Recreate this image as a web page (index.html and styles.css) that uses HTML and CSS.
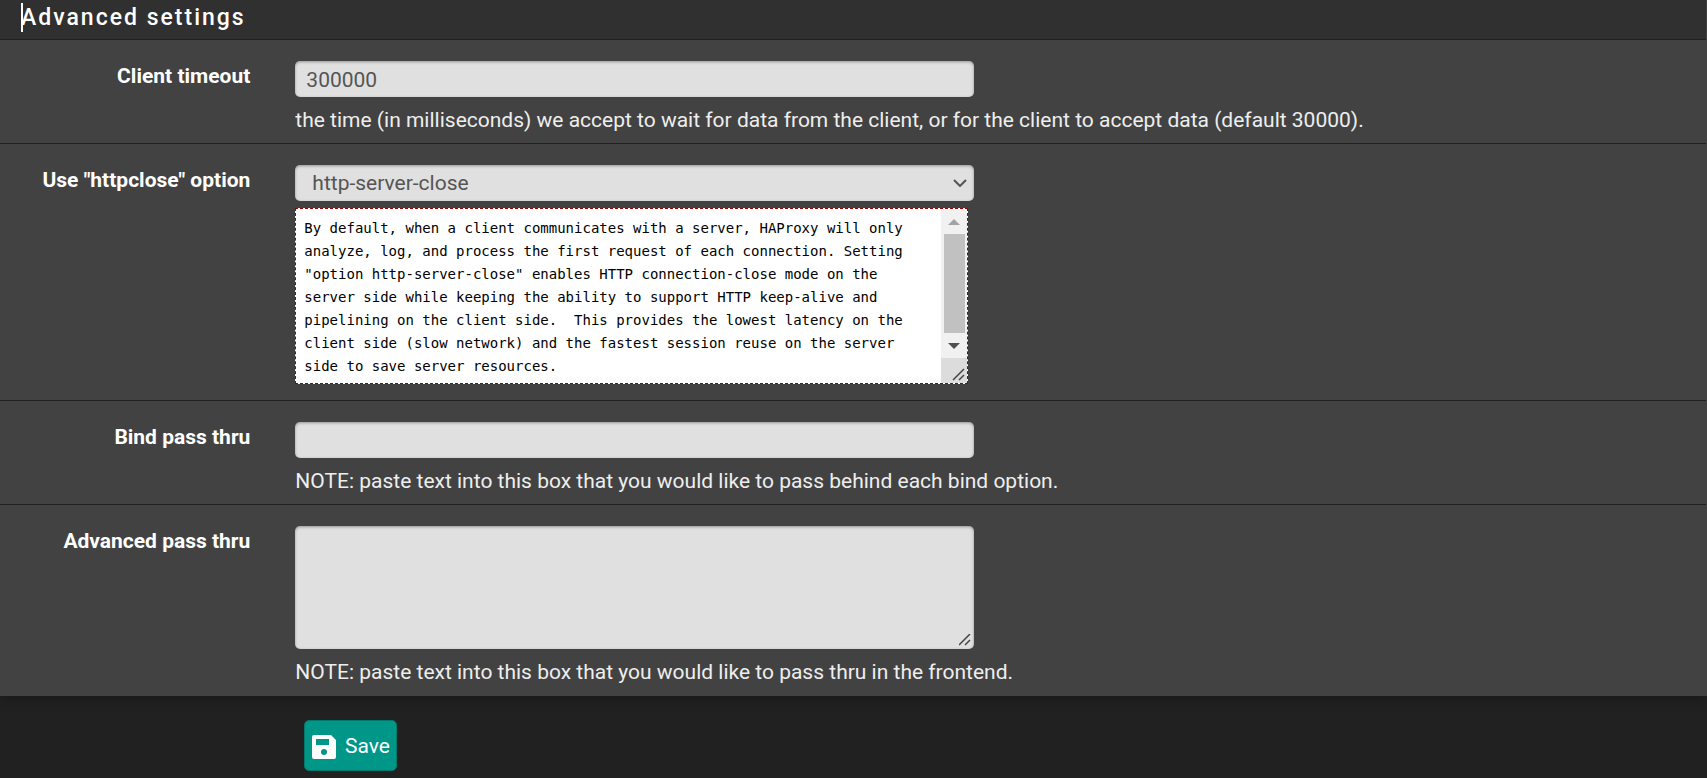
FILE: index.html
```html
<!DOCTYPE html>
<html lang="en">
<head>
<meta charset="utf-8">
<title>Advanced settings</title>
<link rel="stylesheet" href="styles.css">
</head>
<body>
<form class="page">
  <section class="panel">
    <header class="panel-heading">
      <span class="caret"></span>
      <h2 class="panel-title">Advanced settings</h2>
    </header>
    <div class="row">
      <label class="label" for="timeout">Client timeout</label>
      <input class="control" id="timeout" type="text" value="300000">
      <p class="help">the time (in milliseconds) we accept to wait for data from the client, or for the client to accept data (default 30000).</p>
    </div>
    <div class="row">
      <label class="label" for="httpclose">Use "httpclose" option</label>
      <div class="select-wrap">
        <select class="control select" id="httpclose"><option>http-server-close</option></select>
        <svg class="chevron" viewBox="0 0 14 8" aria-hidden="true"><path d="M1 1l6 6 6-6"/></svg>
      </div>
      <div class="description-wrap">
        <textarea class="description" aria-label="Option description" readonly>By default, when a client communicates with a server, HAProxy will only
analyze, log, and process the first request of each connection. Setting
"option http-server-close" enables HTTP connection-close mode on the
server side while keeping the ability to support HTTP keep-alive and
pipelining on the client side.  This provides the lowest latency on the
client side (slow network) and the fastest session reuse on the server
side to save server resources.</textarea>
        <div class="scrollbar" aria-hidden="true">
          <svg class="arrow arrow-up" viewBox="0 0 12 6"><path d="M0 6l6-6 6 6z"/></svg>
          <span class="thumb"></span>
          <svg class="arrow arrow-down" viewBox="0 0 12 6"><path d="M0 0l6 6 6-6z"/></svg>
          <span class="corner"><svg class="grip" viewBox="0 0 13 13"><path d="M1 12L12 1M7 12l5-5"/></svg></span>
        </div>
      </div>
    </div>
    <div class="row">
      <label class="label" for="bind">Bind pass thru</label>
      <input class="control" id="bind" type="text">
      <p class="help">NOTE: paste text into this box that you would like to pass behind each bind option.</p>
    </div>
    <div class="row">
      <label class="label" for="advanced">Advanced pass thru</label>
      <textarea class="control area" id="advanced"></textarea>
      <p class="help">NOTE: paste text into this box that you would like to pass thru in the frontend.</p>
    </div>
  </section>
  <div class="actions">
    <button class="save" type="button">
      <svg class="save-icon" viewBox="0 0 24 24" aria-hidden="true"><path fill-rule="evenodd" d="M2 0h17l5 5v17a2 2 0 0 1-2 2H2a2 2 0 0 1-2-2V2a2 2 0 0 1 2-2zM4 4v6h13V4zM12 14a3 3 0 1 0 0 6 3 3 0 0 0 0-6z"/></svg>
      Save
    </button>
  </div>
</form>
</body>
</html>
```
FILE: styles.css
```css
* { box-sizing: border-box; }

body {
  margin: 0;
  background: #212121;
  color: #eee;
  font: 21px/30px Roboto, "Liberation Sans", sans-serif;
}

.page { margin: 0; }

.panel {
  background: #424242;
  border-right: 1px solid #424242;
  box-shadow: 0 2px 12px rgba(0, 0, 0, 0.3);
}

.panel-heading {
  display: flex;
  align-items: center;
  height: 40px;
  padding: 0 21px 4px;
  background: #303030;
  border-bottom: 1px solid #212121;
}

.caret {
  width: 2px;
  height: 29px;
  margin-right: -2px;
  background: #fff;
}

.panel-title {
  margin: 0;
  color: #fff;
  font-size: 23px;
  font-weight: 500;
  letter-spacing: 2px;
}

.row {
  display: grid;
  grid-template-columns: 2fr 5fr 5fr;
  padding-top: 21px;
  border-bottom: 1px solid #212121;
}

.row:last-child { border-bottom-color: #424242; }

.label {
  grid-column: 1;
  padding-right: 34px;
  color: #fff;
  font-weight: 700;
  text-align: right;
}

.control {
  grid-column: 2;
  justify-self: start;
  width: calc(100% - 32px);
  height: 36px;
  margin: 0 22px 0 11px;
  padding: 2px 11px 0;
  border: 0;
  border-radius: 5px;
  background: #e0e0e0;
  box-shadow: inset 0 1px 3px rgba(0, 0, 0, 0.35);
  color: #555;
  font: inherit;
}

.select-wrap {
  grid-column: 2;
  position: relative;
}

.select {
  display: block;
  appearance: none;
  padding: 0 17px;
}

.chevron {
  position: absolute;
  top: 14px;
  right: 28px;
  width: 14px;
  height: 8px;
  fill: none;
  stroke: #555;
  stroke-width: 2;
  pointer-events: none;
}

.help {
  grid-column: 2 / 4;
  margin: 0;
  padding: 8px 11px;
}

.description-wrap {
  grid-column: 2;
  position: relative;
  width: calc(100% - 38px);
  margin: 7px 0 16px 11px;
}

.description {
  display: block;
  width: 100%;
  height: 176px;
  padding: 8px;
  overflow: auto;
  resize: none;
  border: 1px dashed #900;
  background: #fff;
  color: #000;
  font: 14px/23px "DejaVu Sans Mono", monospace;
  white-space: pre;
}

.scrollbar {
  position: absolute;
  inset: 1px 1px 1px auto;
  display: flex;
  flex-direction: column;
  align-items: center;
  width: 26px;
  background: #f1f1f1;
}

.arrow {
  flex: none;
  width: 12px;
  height: 6px;
  margin: 10px 0 9px;
}

.arrow-up { fill: #a3a3a3; }
.arrow-down { fill: #505050; }

.thumb {
  flex: 1;
  width: 21px;
  background: #c1c1c1;
}

.corner {
  display: flex;
  align-items: flex-end;
  justify-content: flex-end;
  width: 100%;
  height: 25px;
  padding: 2px;
  background: #dcdcdc;
}

.grip {
  width: 13px;
  height: 13px;
  fill: none;
  stroke: #444;
  stroke-width: 1.5;
}

.area {
  height: 123px;
  resize: both;
}

.area::-webkit-resizer {
  background: right 3px bottom 3px / 13px 13px no-repeat url("data:image/svg+xml,%3Csvg xmlns='http://www.w3.org/2000/svg' viewBox='0 0 13 13'%3E%3Cpath d='M1 12L12 1M7 12l5-5' stroke='%23444' stroke-width='1.5'/%3E%3C/svg%3E");
}

.actions { padding: 24px 304px 6px; }

.save {
  display: flex;
  align-items: center;
  gap: 9px;
  height: 51px;
  padding: 0 6px 0 7px;
  border: 1px solid #00796b;
  border-radius: 5px;
  background: #009688;
  color: #fff;
  font: inherit;
}

.save-icon {
  width: 24px;
  height: 24px;
  margin-top: 3px;
  fill: #fff;
}
```
